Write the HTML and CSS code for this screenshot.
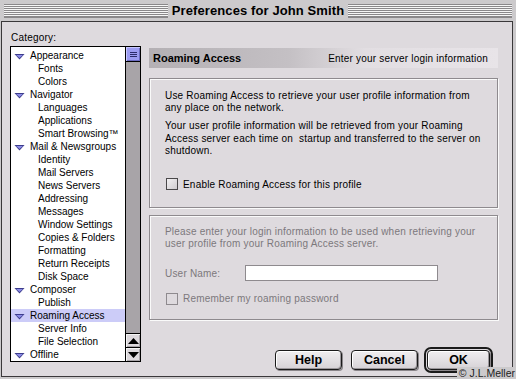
FILE: index.html
```html
<!DOCTYPE html>
<html>
<head>
<meta charset="utf-8">
<link rel="stylesheet" href="styles.css">
</head>
<body>
<div class="frame">
  <div class="titlebar">
    <div class="stripes"></div>
    <div class="title">Preferences for John Smith</div>
    <div class="stripes"></div>
  </div>
  <div class="content">
    <div class="leftcol">
      <div class="cat-label">Category:</div>
      <div class="tree">
        <div class="rows">
          <div class="row parent"><span class="tri"></span>Appearance</div>
          <div class="row child">Fonts</div>
          <div class="row child">Colors</div>
          <div class="row parent"><span class="tri"></span>Navigator</div>
          <div class="row child">Languages</div>
          <div class="row child">Applications</div>
          <div class="row child">Smart Browsing™</div>
          <div class="row parent"><span class="tri"></span>Mail &amp; Newsgroups</div>
          <div class="row child">Identity</div>
          <div class="row child">Mail Servers</div>
          <div class="row child">News Servers</div>
          <div class="row child">Addressing</div>
          <div class="row child">Messages</div>
          <div class="row child">Window Settings</div>
          <div class="row child">Copies &amp; Folders</div>
          <div class="row child">Formatting</div>
          <div class="row child">Return Receipts</div>
          <div class="row child">Disk Space</div>
          <div class="row parent"><span class="tri"></span>Composer</div>
          <div class="row child">Publish</div>
          <div class="row parent selected"><span class="tri"></span>Roaming Access</div>
          <div class="row child">Server Info</div>
          <div class="row child">File Selection</div>
          <div class="row parent"><span class="tri"></span>Offline</div>
        </div>
        <div class="scrollbar">
          <div class="thumb"><span></span><span></span><span></span></div>
          <div class="track"></div>
          <div class="arrow"><svg width="11" height="6" viewBox="0 0 11 6"><path d="M0 6 L5.5 0 L11 6 Z" fill="#000"/></svg></div>
          <div class="arrow"><svg width="11" height="6" viewBox="0 0 11 6"><path d="M0 0 L5.5 6 L11 0 Z" fill="#000"/></svg></div>
        </div>
      </div>
    </div>
    <div class="rightcol">
      <div class="header">
        <span class="h-title">Roaming Access</span>
        <span class="h-sub">Enter your server login information</span>
      </div>
      <div class="group g1">
        <p class="para">Use Roaming Access to retrieve your user profile information from any place on the network.</p>
        <p class="para p2">Your user profile information will be retrieved from your Roaming Access server each time on&nbsp; startup and transferred to the server on shutdown.</p>
        <div class="check-row c1"><span class="checkbox"></span>Enable Roaming Access for this profile</div>
      </div>
      <div class="group g2 disabled">
        <p class="para">Please enter your login information to be used when retrieving your user profile from your Roaming Access server.</p>
        <div class="field-row"><span class="field-label">User Name:</span><span class="input"></span></div>
        <div class="check-row c2"><span class="checkbox"></span>Remember my roaming password</div>
      </div>
      <div class="buttons">
        <span class="btn">Help</span>
        <span class="btn">Cancel</span>
        <span class="default-ring"><span class="btn ok">OK</span></span>
      </div>
    </div>
  </div>
  <div class="copyright">© J.L.Meller</div>
</div>
</body>
</html>
```

FILE: styles.css
```css
* { box-sizing: border-box; }
html, body { margin: 0; padding: 0; }
body {
  width: 516px;
  height: 379px;
  background: #cccacc;
  font-family: "Liberation Sans", Arial, sans-serif;
  font-size: 10px;
  color: #000;
  overflow: hidden;
}
.frame {
  position: relative;
  width: 516px;
  height: 379px;
  display: flex;
  flex-direction: column;
  background: #cccacc;
  padding: 0 3px 2px 1px;
}
.titlebar {
  height: 21px;
  flex: none;
  display: flex;
  align-items: center;
  gap: 3px;
  padding: 0 1px 0 3px;
}
.stripes {
  flex: 1;
  height: 14px;
  background: repeating-linear-gradient(to bottom, #8a888a 0 1px, #f6f6f6 1px 2px);
  border-bottom: 1px solid #8a888a;
}
.title {
  font-weight: bold;
  font-size: 13px;
  letter-spacing: 0.1px;
  padding: 0 1px;
  line-height: 21px;
}
.content {
  flex: 1;
  display: flex;
  gap: 8px;
  background: #dedade;
  border: 1px solid #3a383a;
  padding: 10px 14px 0 8px;
}
.leftcol {
  width: 131px;
  flex: none;
  display: flex;
  flex-direction: column;
}
.cat-label {
  height: 12px;
  line-height: 12px;
  margin-left: 1px;
  margin-bottom: 2px;
  letter-spacing: 0.2px;
}
.tree {
  height: 316px;
  border: 1px solid #000;
  background: #fff;
  display: flex;
}
.rows {
  flex: 1;
  padding-top: 2px;
}
.row {
  height: 13px;
  line-height: 13px;
  white-space: nowrap;
  display: flex;
  align-items: center;
}
.row.parent { padding-left: 3px; }
.row.child { padding-left: 27px; }
.row.selected { background: #ccccf8; }
.tri {
  width: 11px;
  height: 6px;
  margin-right: 5px;
  margin-top: 2px;
  background: #3c3c8c;
  clip-path: polygon(0 0, 100% 0, 50% 100%);
  position: relative;
}
.tri::after {
  content: "";
  position: absolute;
  left: 1.5px; top: 1px; right: 1.5px; bottom: 1.6px;
  background: #8c8ce6;
  clip-path: polygon(0 0, 100% 0, 50% 100%);
}
.scrollbar {
  width: 15px;
  flex: none;
  border-left: 1px solid #000;
  display: flex;
  flex-direction: column;
  background: #a8a4a8;
}
.thumb {
  height: 15px;
  background: #9c9cf2;
  border-bottom: 1px solid #000;
  display: flex;
  flex-direction: column;
  align-items: center;
  justify-content: center;
  gap: 1px;
  box-shadow: inset 1px 1px #c8c8ff, inset -1px -1px #6a6ac0;
}
.thumb span {
  width: 7px;
  height: 1px;
  background: #2c2c6c;
}
.track { flex: 1; }
.arrow {
  height: 14px;
  border-top: 1px solid #000;
  background: #dcd8dc;
  display: flex;
  align-items: center;
  justify-content: center;
  box-shadow: inset 1px 1px #f4f4f4, inset -1px -1px #a8a4a8;
}
.rightcol {
  flex: 1;
  display: flex;
  flex-direction: column;
  padding-top: 16px;
}
.header {
  height: 20px;
  display: flex;
  align-items: center;
  justify-content: space-between;
  padding: 0 10px 0 4px;
  background: linear-gradient(to right, #b4b0b4 0%, #c4c0c4 40%, #e2dee2 62%, #e8e4e8 100%);
}
.h-title {
  font-weight: bold;
  font-size: 11px;
}
.h-sub { letter-spacing: 0.2px; }
.group {
  border: 1px solid #8e8a8e;
  box-shadow: inset 1px 1px #fafafa, 1px 1px #fafafa;
  padding: 11px 12px 0 15px;
  letter-spacing: 0.2px;
}
.g1 { margin-top: 10px; height: 130px; }
.g2 { margin-top: 7px; height: 105px; padding-top: 10px; }
.para {
  margin: 0;
  line-height: 12px;
}
.p2 { margin-top: 6px; line-height: 12.5px; }
.disabled { color: #7c787c; }
.check-row {
  display: flex;
  align-items: center;
  height: 13px;
  line-height: 13px;
}
.c1 { margin-top: 20px; }
.c2 { margin-top: 11px; }
.checkbox {
  width: 12px;
  height: 12px;
  margin: 0 5px 0 1px;
  border: 1px solid #4a484a;
  background: linear-gradient(135deg, #f2f0f2, #cfcbcf);
}
.disabled .checkbox {
  border-color: #8e8a8e;
  background: #dedade;
}
.field-row {
  display: flex;
  align-items: center;
  margin-top: 15px;
  height: 16px;
}
.field-label { width: 80px; }
.input {
  width: 193px;
  height: 16px;
  background: #fff;
  border: 1px solid #8e8a8e;
}
.buttons {
  margin-top: 28px;
  height: 24px;
  display: flex;
  align-items: center;
  justify-content: flex-end;
  padding-right: 5px;
}
.btn {
  width: 67px;
  height: 20px;
  border: 1px solid #1a1a1a;
  border-radius: 4px;
  background: linear-gradient(to bottom, #f0eef0, #d6d2d6);
  box-shadow: inset 1px 1px #fff, inset -1px -1px #9a969a, 1px 1px #8a868a;
  display: flex;
  align-items: center;
  justify-content: center;
  font-weight: bold;
  font-size: 12.5px;
  margin-left: 9px;
}
.default-ring {
  margin-left: 6px;
  border: 2px solid #1a1a1a;
  border-radius: 7px;
  padding: 1px;
  display: flex;
}
.btn.ok {
  margin-left: 0;
  width: 63px;
}
.copyright {
  position: absolute;
  right: 0;
  bottom: 0;
  font-size: 10.5px;
  line-height: 12px;
  color: #222;
  background: #cccacc;
  padding: 0 1px 0 2px;
}
```
